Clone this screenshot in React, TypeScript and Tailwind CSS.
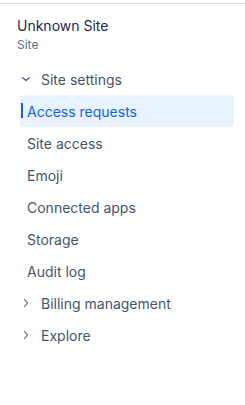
import React from 'react';

const ITEMS = ['Access requests', 'Site access', 'Emoji', 'Connected apps', 'Storage', 'Audit log'];

const ChevronDown = () => (
  <svg width="12" height="12" viewBox="0 0 12 12" fill="none" stroke="#44546f" strokeWidth="1.1" strokeLinecap="round" strokeLinejoin="round">
    <path d="M2.5 4.5 6 7.5l3.5-3" />
  </svg>
);

const ChevronRight = () => (
  <svg width="12" height="12" viewBox="0 0 12 12" fill="none" stroke="#44546f" strokeWidth="1.1" strokeLinecap="round" strokeLinejoin="round">
    <path d="M4.5 2.5 7.5 6l-3 3.5" />
  </svg>
);

export default function App() {
  return (
    <div className="w-[245px] h-[405px] bg-white pt-[3px]" style={{ fontFamily: 'Inter, "Noto Sans", sans-serif' }}>
      <div className="border-t border-[#dcdfe4] h-full">
        {/* Header */}
        <div className="pl-[17px] pt-[12px]">
          <div className="text-[14px] leading-[20px] text-[#172b4d]">Unknown Site</div>
          <div className="text-[12px] leading-[16px] text-[#626f86] mt-[1px]">Site</div>
        </div>

        {/* Nav */}
        <div className="mt-[10px] pl-[20px] pr-[11px]">
          <div className="h-[32px] flex items-center gap-[9px] text-[14px] text-[#44546f]">
            <ChevronDown />
            <span>Site settings</span>
          </div>
          {ITEMS.map((label, i) => (
            <div
              key={label}
              className={`relative h-[32px] flex items-center pl-[7px] rounded-[4px] text-[14px] ${
                i === 0 ? 'bg-[#e9f2ff] text-[#0c66e4]' : 'text-[#44546f]'
              }`}
            >
              {i === 0 && <span className="absolute left-[1px] top-[8px] h-[15px] w-[2px] bg-[#0c66e4]" />}
              {label}
            </div>
          ))}
          {['Billing management', 'Explore'].map((label) => (
            <div key={label} className="h-[32px] flex items-center gap-[9px] text-[14px] text-[#44546f]">
              <ChevronRight />
              <span>{label}</span>
            </div>
          ))}
        </div>
      </div>
    </div>
  );
}
